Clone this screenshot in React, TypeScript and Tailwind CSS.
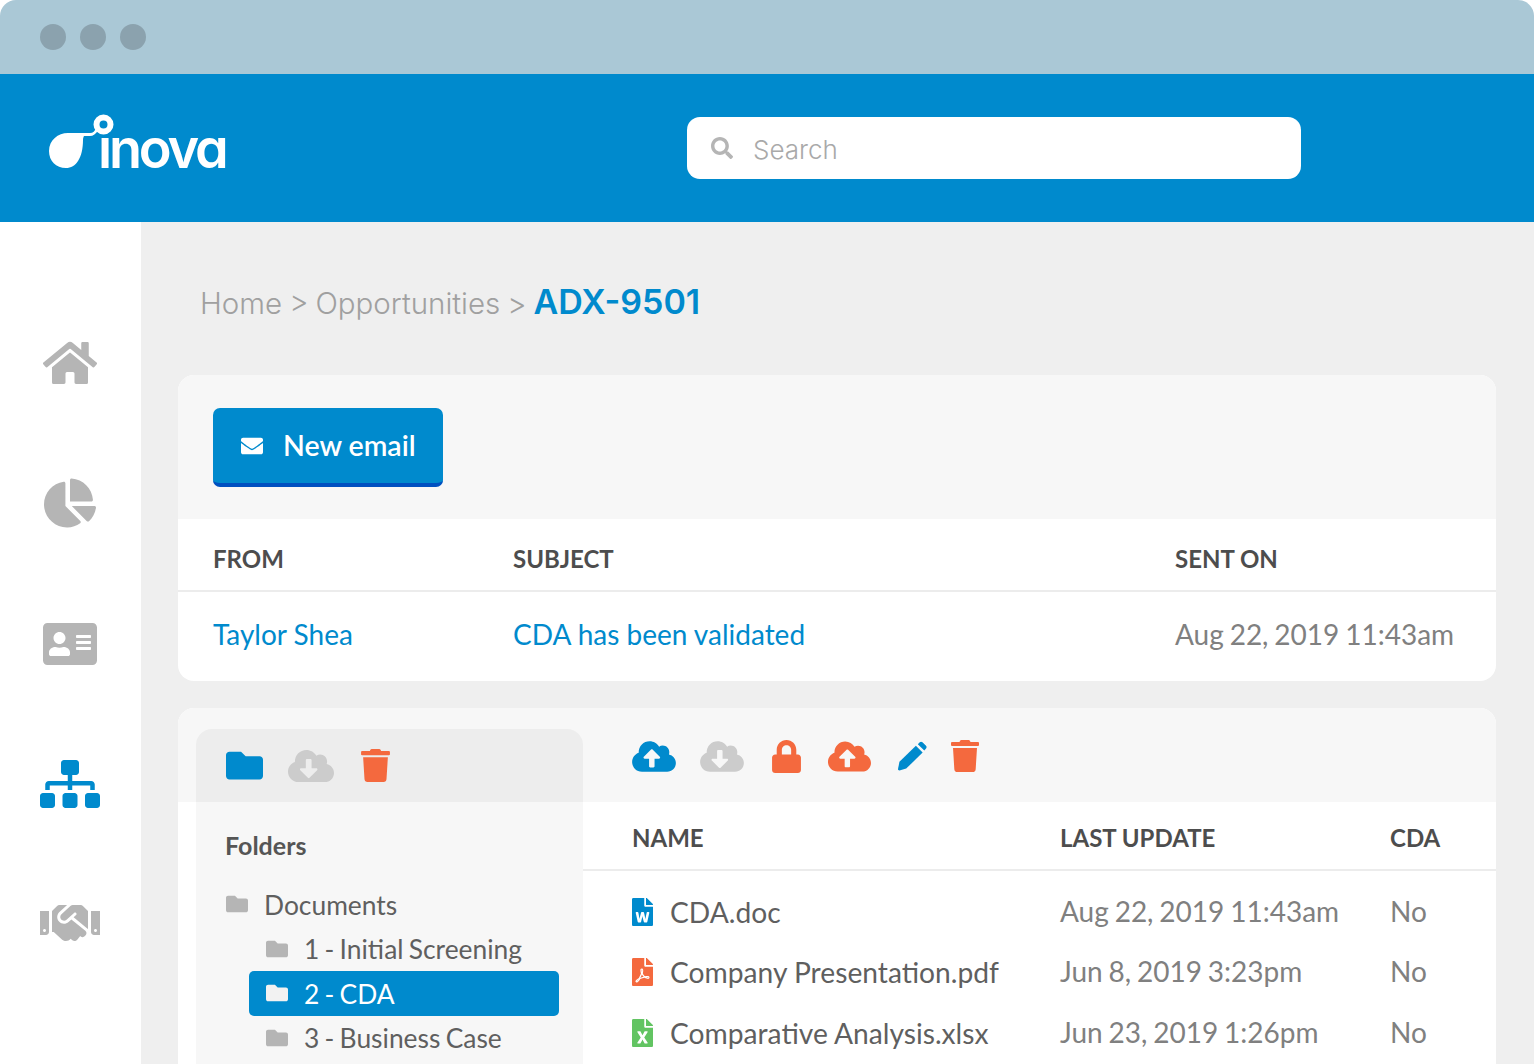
import React from "react";
import {
  FaHome, FaChartPie, FaAddressCard, FaSitemap, FaHandshake, FaCloudUploadAlt, FaCloudDownloadAlt,
  FaLock, FaTrash, FaFolder, FaFileWord, FaFilePdf, FaFileExcel, FaEnvelope, FaSearch,
} from "react-icons/fa";

function Logo() {
  return (
    <div className="relative w-[180px] h-[56px] text-white">
      <span className="absolute left-[49px] top-[-2px] font-['Inter',sans-serif] font-semibold text-[54px] leading-[62px] tracking-[-3.2px] [font-feature-settings:'cv11']">
        inova
      </span>
      <svg className="absolute left-0 top-[-10px] overflow-visible" width="80" height="66" viewBox="0 -10 80 66" fill="none">
        <path d="M0 31 C0 20 9 13 19 13 H41 C44 13 46 11 47 8 L49 10 C47 14 44 16 41 16 H35 C34.5 17 34 18 34 20 C34 38 27 48 17 48 C7 48 0 41 0 31 Z" fill="white" />
        <circle cx="54.5" cy="4.5" r="7" stroke="white" strokeWidth="6" fill="#008acd" />
      </svg>
    </div>
  );
}

function FolderRow({ label, active, indent }: { label: string; active?: boolean; indent?: boolean }) {
  return (
    <div
      className={`flex items-center h-[44.5px] ${indent ? "ml-[53px] w-[310px] pl-[17px] rounded-[5px]" : "ml-[30px]"} ${active ? "bg-[#008acd] text-white" : "text-[#5f5f5f]"}`}
    >
      <FaFolder size={22} className={`shrink-0 ${active ? "text-[#f2f2f2]" : "text-[#b5b5b5]"}`} />
      <span className="ml-[16px] pt-[1px] text-[26.4px] leading-none [word-spacing:-1.5px]">{label}</span>
    </div>
  );
}

function FileRow({ icon, name, date }: { icon: React.ReactNode; name: string; date: string }) {
  return (
    <div className="flex items-center h-[60.3px] text-[#5f5f5f] text-[28.2px]">
      <div className="w-[428px] flex items-center shrink-0">
        {icon}
        <span className="ml-[17px]">{name}</span>
      </div>
      <div className="w-[330px] shrink-0 text-[#808080] text-[28px] [word-spacing:-1.3px] -mt-[2px]">{date}</div>
      <div className="text-[#808080] text-[28px] -mt-[2px]">No</div>
    </div>
  );
}

function Pencil() {
  return (
    <svg width="29" height="30" viewBox="0 0 30 30" fill="#008acd" className="shrink-0">
      <path d="M1.5 21 L18.5 4.5 L25.5 11.5 L8.5 28 L1.5 30 C0.5 30 0 29.5 0 28.5 Z" />
      <path d="M20.5 2.8 L22.5 0.8 C23.3 0 24.5 0 25.3 0.8 L29 4.5 C29.8 5.3 29.8 6.5 29 7.3 L27.2 9.3 Z" />
    </svg>
  );
}

export default function App() {
  return (
    <div className="w-[1534px] h-[1064px] overflow-hidden bg-white font-['Lato',sans-serif]">
      <div className="h-[74px] bg-[#aac8d6] rounded-t-[16px] flex items-center pl-[40px] gap-[14px]">
        <span className="w-[26px] h-[26px] rounded-full bg-[#8ba2ae]" />
        <span className="w-[26px] h-[26px] rounded-full bg-[#8ba2ae]" />
        <span className="w-[26px] h-[26px] rounded-full bg-[#8ba2ae]" />
      </div>
      <header className="h-[148px] bg-[#008acd] flex items-center pl-[49px]">
        <Logo />
        <div className="ml-[458px] w-[614px] h-[62px] bg-white rounded-[13px] flex items-center pl-[24px]">
          <FaSearch size={22} className="text-[#b5b5b5]" />
          <span className="ml-[20px] pt-[3px] text-[26px] font-light text-[#a9a9a9] font-['Inter',sans-serif]">Search</span>
        </div>
      </header>
      <div className="flex h-[842px]">
        <aside className="w-[141px] shrink-0 bg-white flex flex-col items-center text-[#b5b5b5] pt-[117px] pr-[1px]">
          <div className="h-[48px] flex items-center"><FaHome size={54} /></div>
          <div className="h-[48px] mt-[92px] flex items-center"><FaChartPie size={52} /></div>
          <div className="h-[48px] mt-[93px] flex items-center"><FaAddressCard size={54} /></div>
          <div className="h-[48px] mt-[92px] flex items-center text-[#008acd]"><FaSitemap size={60} /></div>
          <div className="h-[48px] mt-[91px] flex items-center"><FaHandshake size={60} /></div>
        </aside>
        <main className="flex-1 bg-[#efefef] pl-[37px] pr-[38px]">
          <div className="h-[153px] pt-[59px] pl-[22px] flex items-start text-[#a0a0a0] leading-[44px]">
            <span className="font-['Inter',sans-serif] font-light text-[29.5px] [word-spacing:-1.3px]">Home &gt; Opportunities &gt;&nbsp;</span>
            <span className="text-[#008acd] font-semibold text-[34px] -mt-[1px] font-['Inter',sans-serif]">ADX-9501</span>
          </div>
          <section className="bg-white rounded-[16px] h-[306px] overflow-hidden">
            <div className="h-[144px] bg-[#f7f7f7] pl-[35px] pt-[33px]">
              <button className="h-[79px] w-[230px] rounded-[7px] bg-[#008acd] border-b-[4px] border-[#0050c0] text-white flex items-center pl-[28px]">
                <FaEnvelope size={22} />
                <span className="ml-[20px] text-[28.5px] font-semibold -mt-[1px]">New email</span>
              </button>
            </div>
            <div className="h-[73px] flex items-center pl-[35px] pt-[8px] border-b-2 border-[#ececec] text-[24px] font-bold text-[#4d4d4d]">
              <span className="w-[300px]">FROM</span>
              <span className="w-[662px]">SUBJECT</span>
              <span>SENT ON</span>
            </div>
            <div className="h-[87px] flex items-center pl-[35px] pb-[3px] text-[28px] text-[#008acd]">
              <span className="w-[300px]">Taylor Shea</span>
              <span className="w-[662px]">CDA has been validated</span>
              <span className="text-[#808080] [word-spacing:-1.3px]">Aug 22, 2019 11:43am</span>
            </div>
          </section>
          <section className="mt-[27px] bg-white rounded-t-[16px] h-[356px] overflow-hidden flex">
            <div className="w-[405px] shrink-0">
              <div className="h-[94px] bg-[#f7f7f7] pt-[21px] pl-[18px]">
                <div className="h-[73px] bg-[#ededed] rounded-t-[16px] flex items-center pl-[30px]">
                  <FaFolder size={37} className="text-[#008acd]" />
                  <FaCloudDownloadAlt size={46} className="ml-[25px] text-[#cccccc]" />
                  <FaTrash className="ml-[27px] w-[29px] h-[33px] text-[#f4693e]" />
                </div>
              </div>
              <div className="ml-[18px] bg-[#f7f7f7] h-[262px]">
                <div className="pt-[28px] pl-[29px] text-[25px] font-bold text-[#555555] leading-[30px]">Folders</div>
                <div className="mt-[22px]">
                  <FolderRow label="Documents" />
                  <FolderRow label="1 - Initial Screening" indent />
                  <FolderRow label="2 - CDA" active indent />
                  <FolderRow label="3 - Business Case" indent />
                </div>
              </div>
            </div>
            <div className="flex-1">
              <div className="h-[94px] bg-[#f7f7f7] pl-[49px] pt-[2px] flex items-center">
                <FaCloudUploadAlt className="w-[44px] h-[35px] text-[#008acd]" />
                <FaCloudDownloadAlt className="ml-[24px] w-[44px] h-[35px] text-[#cccccc]" />
                <FaLock className="ml-[28px] w-[29px] h-[33px] text-[#f4693e]" />
                <FaCloudUploadAlt className="ml-[27px] w-[43px] h-[35px] text-[#f4693e]" />
                <div className="ml-[27px]"><Pencil /></div>
                <FaTrash className="ml-[24px] w-[28px] h-[32px] text-[#f4693e]" />
              </div>
              <div className="h-[69px] flex items-center pl-[49px] pt-[4px] border-b-2 border-[#ececec] text-[24px] font-bold text-[#4d4d4d]">
                <span className="w-[428px]">NAME</span>
                <span className="w-[330px]">LAST UPDATE</span>
                <span>CDA</span>
              </div>
              <div className="pl-[49px] pt-[11px]">
                <FileRow icon={<FaFileWord className="w-[21px] h-[28px] text-[#008acd]" />} name="CDA.doc" date="Aug 22, 2019 11:43am" />
                <FileRow icon={<FaFilePdf className="w-[21px] h-[28px] text-[#f4693e]" />} name="Company Presentation.pdf" date="Jun 8, 2019 3:23pm" />
                <FileRow icon={<FaFileExcel className="w-[21px] h-[28px] text-[#62c462]" />} name="Comparative Analysis.xlsx" date="Jun 23, 2019 1:26pm" />
              </div>
            </div>
          </section>
        </main>
      </div>
    </div>
  );
}
